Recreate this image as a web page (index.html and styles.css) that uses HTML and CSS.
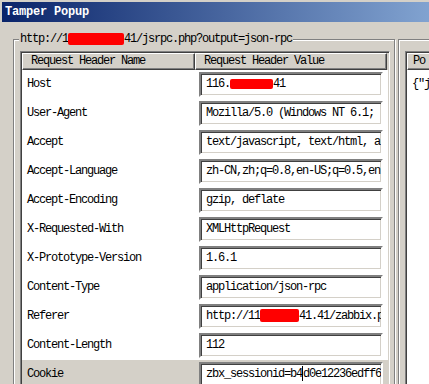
FILE: index.html
```html
<!DOCTYPE html>
<html lang="en">
<head>
  <meta charset="UTF-8">
  <title>Tamper Popup</title>
  <link rel="stylesheet" href="styles.css">
</head>
<body>

  <div class="window">
    <div class="titlebar">Tamper Popup</div>

    <div class="content">
      <div class="group group-left">
        <span class="legend">http://1<span class="redact redact-legend"></span>41/jsrpc.php?output=json-rpc</span>
        <div class="list">
          <div class="head">
            <div class="hcell hname">Request Header Name</div>
            <div class="hcell hvalue">Request Header Value</div>
          </div>
          <div class="row"><div class="name">Host</div><div class="value"><div class="input">116.<span class="redact redact-host"></span>41</div></div></div>
          <div class="row"><div class="name">User-Agent</div><div class="value"><div class="input">Mozilla/5.0 (Windows NT 6.1;</div></div></div>
          <div class="row"><div class="name">Accept</div><div class="value"><div class="input">text/javascript, text/html, a</div></div></div>
          <div class="row"><div class="name">Accept-Language</div><div class="value"><div class="input">zh-CN,zh;q=0.8,en-US;q=0.5,en</div></div></div>
          <div class="row"><div class="name">Accept-Encoding</div><div class="value"><div class="input">gzip, deflate</div></div></div>
          <div class="row"><div class="name">X-Requested-With</div><div class="value"><div class="input">XMLHttpRequest</div></div></div>
          <div class="row"><div class="name">X-Prototype-Version</div><div class="value"><div class="input">1.6.1</div></div></div>
          <div class="row"><div class="name">Content-Type</div><div class="value"><div class="input">application/json-rpc</div></div></div>
          <div class="row"><div class="name">Referer</div><div class="value"><div class="input">http://11<span class="redact redact-ref"></span>41.41/zabbix.p</div></div></div>
          <div class="row"><div class="name">Content-Length</div><div class="value"><div class="input">112</div></div></div>
          <div class="row selected"><div class="name">Cookie</div><div class="value"><div class="input">zbx_sessionid=b4<span class="caret"></span>d0e12236edff6</div></div></div>
        </div>
      </div>

      <div class="splitter"></div>

      <div class="group group-right">
        <div class="list">
          <div class="head">
            <div class="hcell hpost">Po</div>
          </div>
          <div class="post-body">{"j</div>
        </div>
      </div>
    </div>
  </div>

</body>
</html>
```

FILE: styles.css
```css
body {
  margin: 0;
  padding: 0;
  background-color: #d4d0c8;
  font-family: "Liberation Mono", monospace;
  font-size: 12px;
  letter-spacing: -1.2px;
  color: #000;
  overflow: hidden;
}

.window {
  width: 429px;
  height: 384px;
  overflow: hidden;
  box-sizing: border-box;
  padding: 2px 0 0 2px;
  background-color: #d4d0c8;
}

.titlebar {
  height: 20px;
  line-height: 20px;
  padding-left: 3px;
  color: #fff;
  font-weight: bold;
  letter-spacing: -0.2px;
  background: linear-gradient(to right, #0a246a, #a6caf0) no-repeat;
  background-size: 560px 100%;
}

.content {
  display: flex;
  padding: 17px 0 0 11px;
  width: 800px;
}

.group {
  position: relative;
  flex: none;
  border: 1px solid #808080;
  box-shadow: inset 1px 1px 0 #fff, 1px 1px 0 #fff;
  padding: 11px 4px 0 6px;
  height: 400px;
}

.group-left {
  width: 370px;
}

.group-right {
  width: 300px;
}

.legend {
  position: absolute;
  top: -8px;
  left: 5px;
  padding: 0 1px;
  background-color: #d4d0c8;
  line-height: 14px;
}

.splitter {
  width: 3px;
  flex: none;
}

.list {
  border: 1px solid;
  border-color: #808080 #fff #fff #808080;
  box-shadow: inset 1px 1px 0 #404040, inset -1px -1px 0 #d4d0c8;
  padding: 1px;
  background-color: #fff;
  height: 400px;
}

.head {
  display: flex;
  background-color: #d4d0c8;
}

.hcell {
  box-sizing: border-box;
  height: 17px;
  line-height: 15px;
  padding-left: 8px;
  border: 1px solid;
  border-color: #fff #404040 #404040 #fff;
  box-shadow: inset -1px -1px 0 #808080;
}

.hname {
  width: 173px;
}

.hvalue {
  width: 192px;
}

.hpost {
  width: 200px;
  padding-left: 5px;
}

.row {
  display: flex;
  height: 29px;
}

.row.selected {
  background-color: #d4d0c8;
}

.name {
  width: 173px;
  box-sizing: border-box;
  padding-left: 5px;
  line-height: 29px;
}

.value {
  padding: 2px 0 0 4px;
}

.input {
  box-sizing: border-box;
  width: 184px;
  height: 25px;
  line-height: 21px;
  padding-left: 5px;
  white-space: nowrap;
  overflow: hidden;
  background-color: #fff;
  border: 2px solid;
  border-color: #808080 #fff #fff #808080;
  box-shadow: inset 1px 1px 0 #404040, inset -1px -1px 0 #d4d0c8;
}

.redact {
  display: inline-block;
  vertical-align: middle;
  background-color: #ff0000;
  border-radius: 2px;
}

.redact-legend {
  width: 56px;
  height: 12px;
}

.redact-host {
  width: 43px;
  height: 10px;
}

.redact-ref {
  width: 39px;
  height: 13px;
}

.caret {
  display: inline-block;
  width: 1px;
  height: 15px;
  vertical-align: middle;
  background-color: #000;
}

.post-body {
  padding: 6px 0 0 5px;
  line-height: 16px;
}
```
